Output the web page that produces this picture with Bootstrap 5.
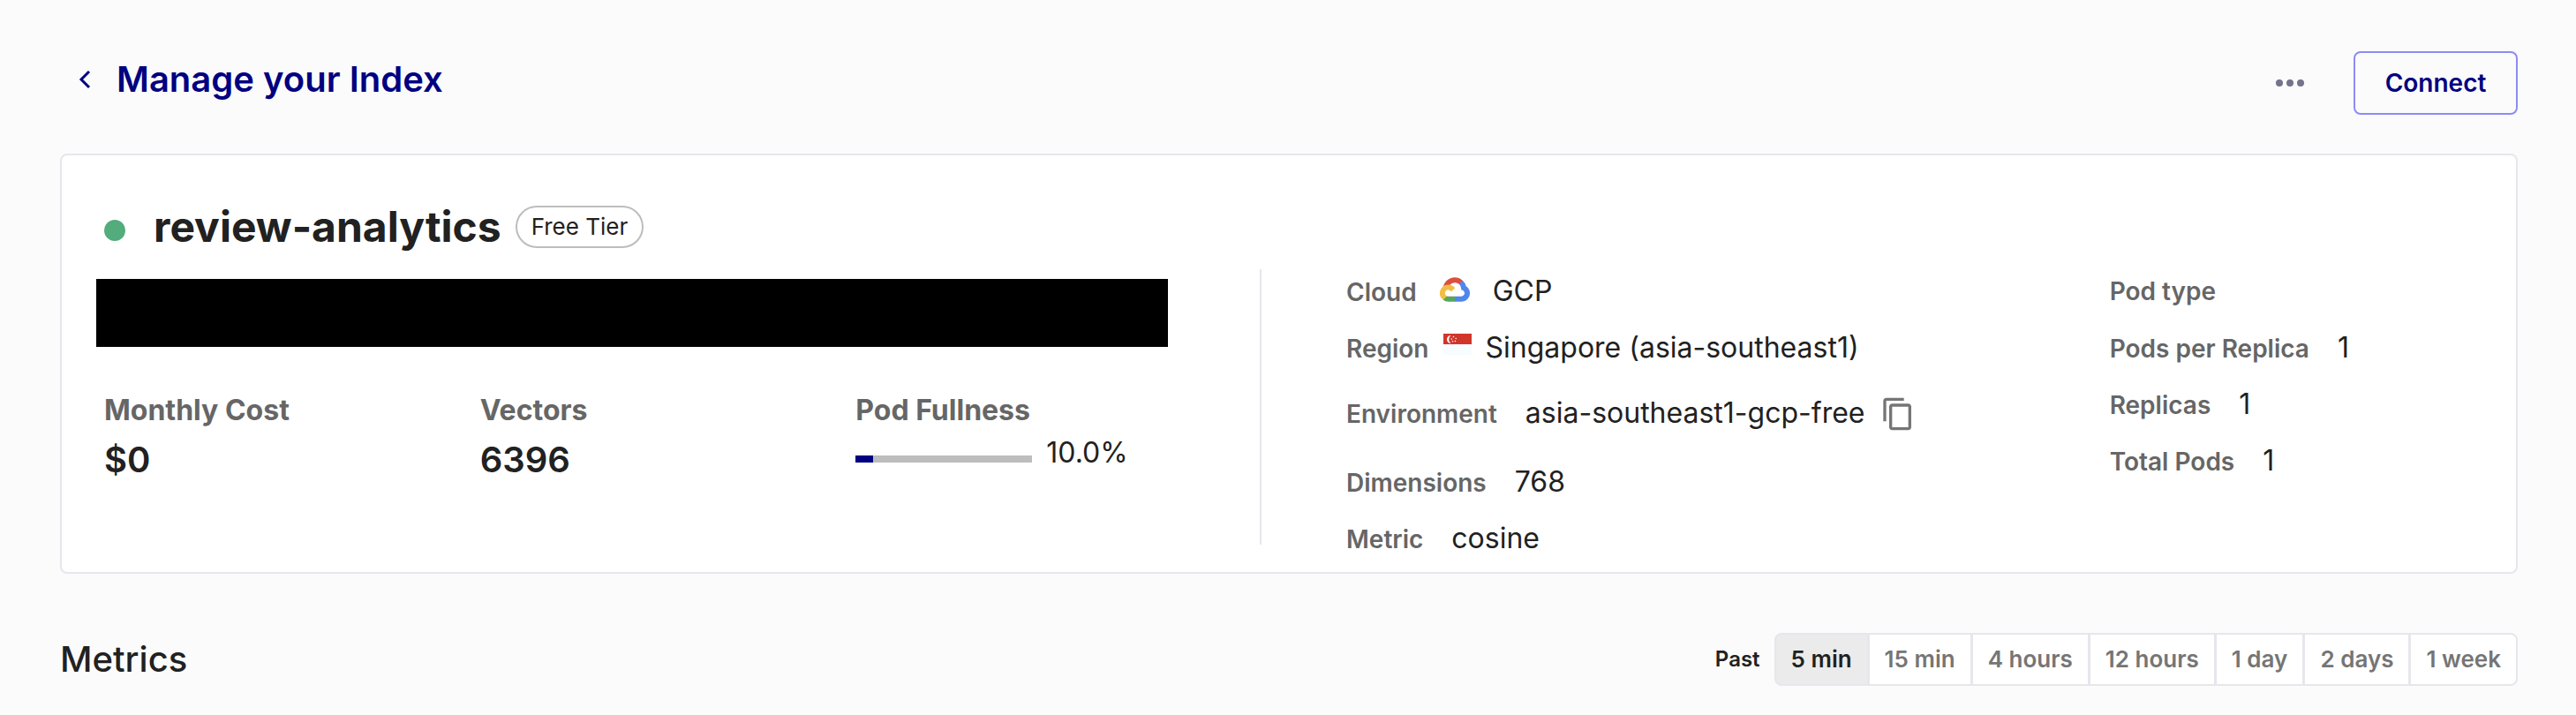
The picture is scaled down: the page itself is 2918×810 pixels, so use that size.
<!DOCTYPE html>
<html lang="en">
<head>
<meta charset="utf-8">
<meta name="viewport" content="width=device-width, initial-scale=1">
<title>Manage your Index</title>
<link href="https://cdn.jsdelivr.net/npm/bootstrap@5.3.0/dist/css/bootstrap.min.css" rel="stylesheet">
<style>
  body { background: #fbfbfc; color: #212121; font-family: Inter, "Liberation Sans", sans-serif; font-size: 32px; line-height: 40px; }
  .page { padding: 58px 66px 32px 68px; }
  .navy { color: #000080; }
  .back-link { font-size: 40px; line-height: 64px; font-weight: 600; gap: 28px; padding-left: 20px; }
  .header-actions { gap: 36px; }
  .btn-more { padding: 20px; line-height: 0; border: 0; }
  .btn-connect { font-size: 28px; line-height: 36px; font-weight: 600; color: #000080; border: 2px solid #8c8cf5; border-radius: 8px; padding: 16px 30px; min-width: 186px; }
  .index-card { margin-top: 44px; border: 2px solid #e6e6ec; border-radius: 8px; background: #fff; display: grid; grid-template-columns: 1359fr 1421fr; }
  .summary { padding: 53px 34px 0 48px; }
  .status-dot { width: 24px; height: 24px; border-radius: 50%; background: #52ac7c; margin: 8px 32px 0 0; }
  .index-name { font-size: 48px; line-height: 56px; font-weight: 700; }
  .tier-pill { font-size: 26px; line-height: 44px; border: 2px solid #bdbdbd; border-radius: 24px; padding: 0 16px; margin-left: 16px; }
  .redacted { background: #000; height: 77px; margin: 31px 72px 52px -9px; }
  .stat-label { font-weight: 700; color: #666; margin-bottom: 8px; }
  .stat-value { font-size: 40px; line-height: 56px; font-weight: 600; }
  .fullness { width: 200px; height: 8px; border-radius: 0; background: #bdbdbd; }
  .fullness .progress-bar { background: #000080; }
  .details { position: relative; display: grid; grid-template-columns: 2fr 1fr; padding: 122px 28px 6px 96px; }
  .details::before { content: ""; position: absolute; left: -2px; top: 129px; bottom: 31px; width: 2px; background: #e6e6ec; }
  .detail-row { display: flex; align-items: baseline; height: 64px; line-height: 64px; }
  .detail-row dt { font-size: 28px; font-weight: 600; color: #666; }
  .detail-row dd { margin: 0 0 0 32px; }
  .detail-row.tall { height: 84px; line-height: 84px; margin-bottom: 4px; }
  .cloud-logo { margin: 0 26px 4px; }
  .region-flag { margin: 0 16px 8px; }
  .btn-copy { padding: 2px 0 0; border: 0; margin-left: 18px; line-height: 0; }
  .metrics-bar { margin-top: 67px; }
  .metrics-title { font-size: 40px; line-height: 60px; font-weight: 500; margin: 0; }
  .past-label { font-size: 24px; font-weight: 600; margin-right: 16px; }
  .range-group .btn { font-size: 26px; line-height: 56px; font-weight: 600; color: #757575; background: #fff; border: 2px solid #e6e6ec; padding: 0 17px; }
  .range-group .btn.active { background: #ebebeb; color: #212121; border-color: #e6e6ec; }
  .range-group .btn:first-child { border-radius: 8px 0 0 8px; }
  .range-group .btn:last-child { border-radius: 0 8px 8px 0; }
</style>
</head>
<body>
<main class="page">
  <header class="d-flex justify-content-between align-items-start">
    <a href="#" class="back-link navy d-flex align-items-center text-decoration-none">
      <svg width="16" height="24" viewBox="0 0 16 24" fill="none" stroke="#000080" stroke-width="3" aria-hidden="true"><path d="M13 3 4 12l9 9"/></svg>
      <span>Manage your Index</span>
    </a>
    <div class="header-actions d-flex align-items-center">
      <button type="button" class="btn btn-more" aria-label="More actions">
        <svg width="32" height="8" viewBox="0 0 32 8" fill="#73738c"><circle cx="4" cy="4" r="4"/><circle cx="16" cy="4" r="4"/><circle cx="28" cy="4" r="4"/></svg>
      </button>
      <button type="button" class="btn btn-connect">Connect</button>
    </div>
  </header>

  <section class="index-card">
    <div class="summary">
      <div class="d-flex align-items-center">
        <span class="status-dot"></span>
        <h1 class="index-name m-0">review-analytics</h1>
        <span class="tier-pill">Free Tier</span>
      </div>
      <div class="redacted"></div>
      <div class="row g-0">
        <div class="col-4">
          <div class="stat-label">Monthly Cost</div>
          <div class="stat-value">$0</div>
        </div>
        <div class="col-4">
          <div class="stat-label">Vectors</div>
          <div class="stat-value">6396</div>
        </div>
        <div class="col-4">
          <div class="stat-label">Pod Fullness</div>
          <div class="d-flex align-items-baseline gap-3">
            <div class="progress fullness" role="progressbar" aria-label="Pod Fullness" aria-valuenow="10" aria-valuemin="0" aria-valuemax="100"><div class="progress-bar" style="width: 10%"></div></div>
            <span>10.0%</span>
          </div>
        </div>
      </div>
    </div>

    <div class="details">
      <dl class="m-0">
        <div class="detail-row">
          <dt>Cloud</dt>
          <dd class="d-flex align-items-baseline m-0">
            <svg class="cloud-logo align-self-center" width="34" height="28" viewBox="0 0 256 206" aria-hidden="true">
              <path fill="#db4f3f" d="M170.25 56.82 192.5 34.57l1.49-9.37C153.44-11.68 88.98-7.5 52.42 33.92 42.27 45.42 34.73 59.76 30.72 74.57l7.97-1.12 44.5-7.34 3.44-3.51c19.8-21.75 53.27-24.67 76.13-6.17z"/>
              <path fill="#5086ec" d="M224.2 73.92a97.8 97.8 0 0 0-30.21-48.72l-31.23 31.23a55.5 55.5 0 0 1 20.37 44.04v5.54c15.36 0 27.8 12.44 27.8 27.8s-12.44 27.48-27.8 27.48h-55.67l-5.46 5.93v33.34l5.46 5.24h55.67c39.93.3 72.56-31.5 72.87-71.43a72.8 72.8 0 0 0-31.8-60.45"/>
              <path fill="#58a55c" d="M71.87 205.8h55.59v-44.51H71.87c-3.96 0-7.8-.85-11.4-2.5l-7.89 2.42-22.4 22.25-1.96 7.58a71.8 71.8 0 0 0 43.65 14.76"/>
              <path fill="#f2be42" d="M71.87 61.43A72.3 72.3 0 0 0 28.22 191.04l32.25-32.25a27.8 27.8 0 1 1 36.78-36.78l32.24-32.24a72.3 72.3 0 0 0-57.62-28.34"/>
            </svg>
            <span>GCP</span>
          </dd>
        </div>
        <div class="detail-row">
          <dt>Region</dt>
          <dd class="d-flex align-items-baseline m-0">
            <svg class="region-flag align-self-center" width="32" height="24" viewBox="0 0 32 24" aria-hidden="true">
              <path fill="#f7fcff" d="M0 0h32v24H0z"/><path fill="#d1362b" d="M0 0h32v12H0z"/>
              <path fill="#fff" d="M8.500 2a4.500 4.500 0 1 0 0 9 5.500 5.500 0 0 1 0-9"/>
              <g fill="#fff"><circle cx="11.500" cy="3.500" r=".8"/><circle cx="9.200" cy="6" r=".8"/><circle cx="14.200" cy="5.500" r=".8"/><circle cx="10.500" cy="8.800" r=".8"/><circle cx="13.400" cy="8.500" r=".8"/></g>
            </svg>
            <span>Singapore (asia-southeast1)</span>
          </dd>
        </div>
        <div class="detail-row tall">
          <dt>Environment</dt>
          <dd>asia-southeast1-gcp-free</dd>
          <dd class="d-flex align-self-center m-0">
            <button type="button" class="btn btn-copy" aria-label="Copy environment">
              <svg width="40" height="40" viewBox="0 0 24 24" fill="#757575"><path d="M16 1H4c-1.100 0-2 .9-2 2v14h2V3h12zm3 4H8c-1.100 0-2 .9-2 2v14c0 1.100.9 2 2 2h11c1.100 0 2-.9 2-2V7c0-1.100-.9-2-2-2m0 16H8V7h11z"/></svg>
            </button>
          </dd>
        </div>
        <div class="detail-row"><dt>Dimensions</dt><dd>768</dd></div>
        <div class="detail-row"><dt>Metric</dt><dd>cosine</dd></div>
      </dl>
      <dl class="m-0">
        <div class="detail-row"><dt>Pod type</dt><dd></dd></div>
        <div class="detail-row"><dt>Pods per Replica</dt><dd>1</dd></div>
        <div class="detail-row"><dt>Replicas</dt><dd>1</dd></div>
        <div class="detail-row"><dt>Total Pods</dt><dd>1</dd></div>
      </dl>
    </div>
  </section>

  <section class="metrics-bar d-flex justify-content-between align-items-center">
    <h2 class="metrics-title">Metrics</h2>
    <div class="d-flex align-items-center">
      <span class="past-label" id="past">Past</span>
      <div class="btn-group range-group" role="group" aria-labelledby="past">
        <button type="button" class="btn active">5 min</button>
        <button type="button" class="btn">15 min</button>
        <button type="button" class="btn">4 hours</button>
        <button type="button" class="btn">12 hours</button>
        <button type="button" class="btn">1 day</button>
        <button type="button" class="btn">2 days</button>
        <button type="button" class="btn">1 week</button>
      </div>
    </div>
  </section>
</main>
<script src="https://cdn.jsdelivr.net/npm/bootstrap@5.3.0/dist/js/bootstrap.bundle.min.js"></script>
</body>
</html>
